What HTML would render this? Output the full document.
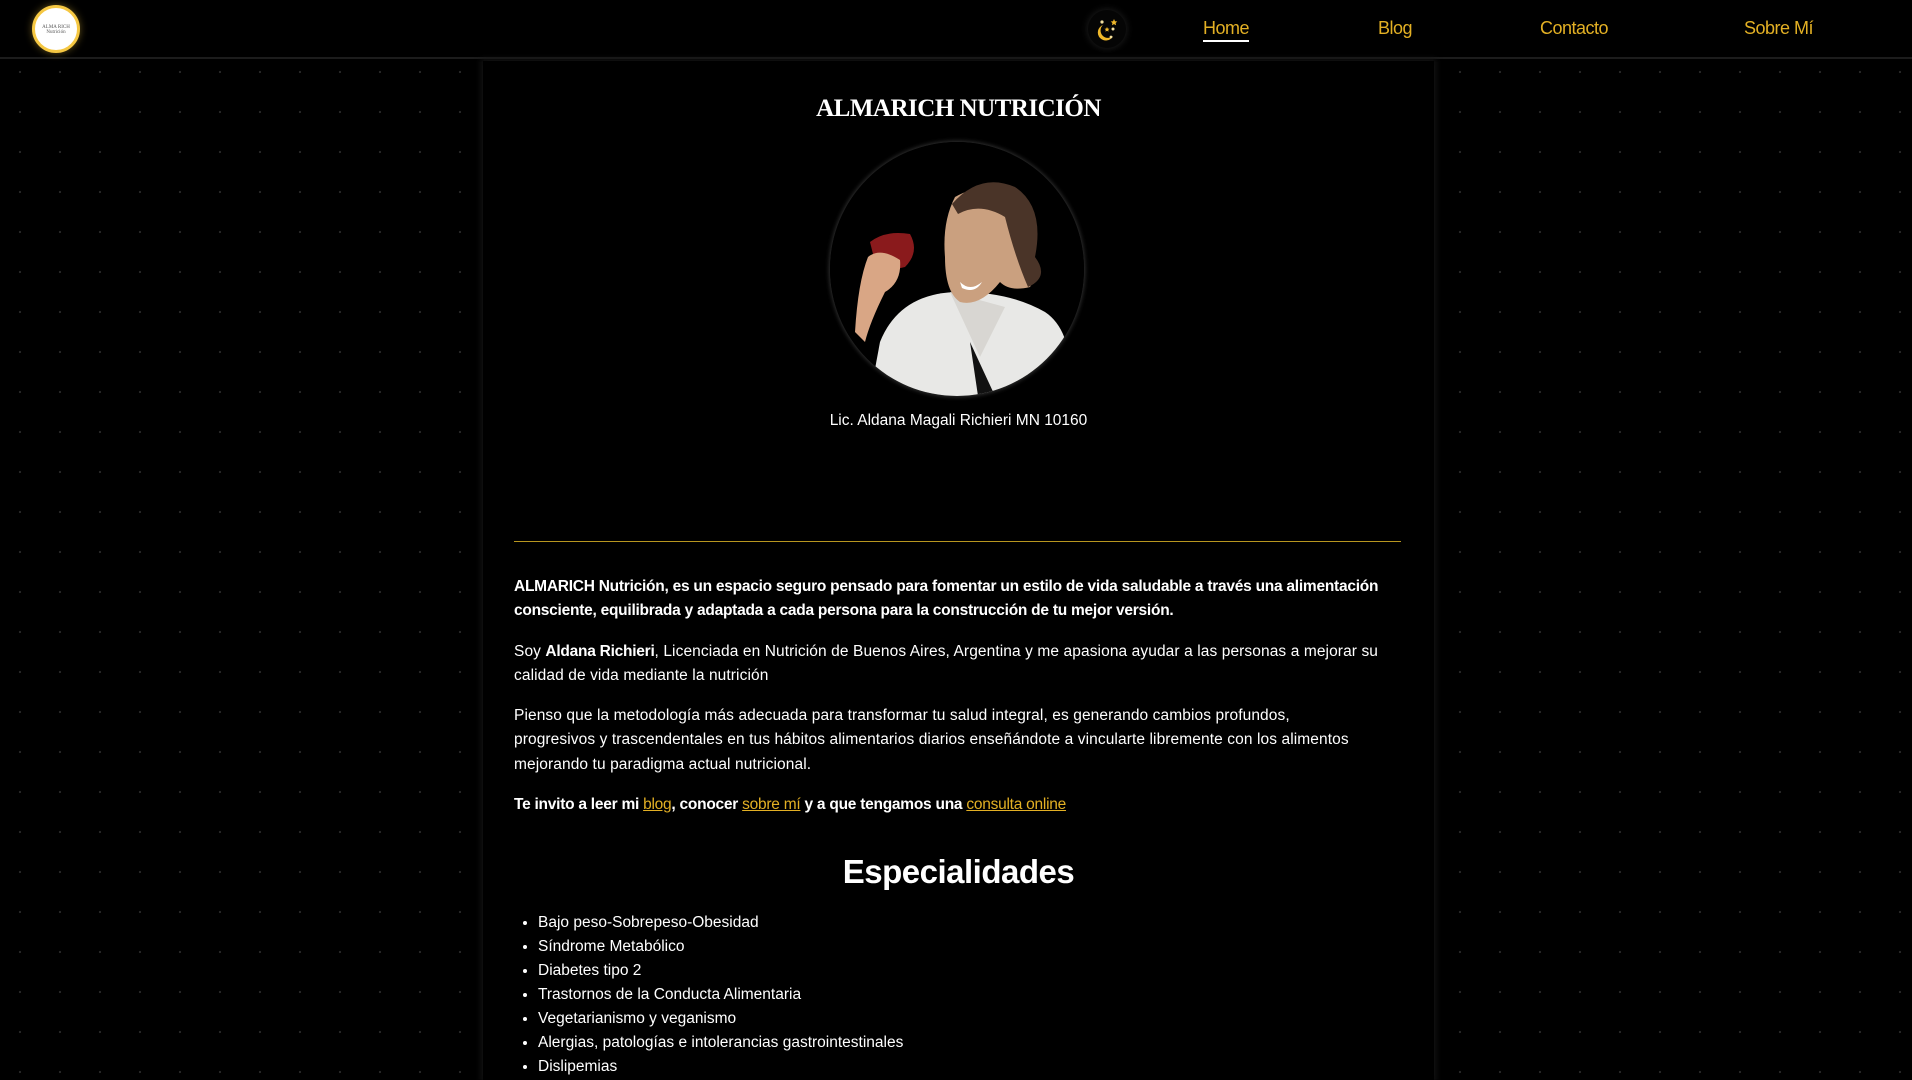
<!DOCTYPE html>
<html><head><meta charset="utf-8">
<style>
*{margin:0;padding:0;box-sizing:border-box}
html,body{width:1912px;height:1080px;overflow:hidden;background:#000;color:#fff;font-family:"Liberation Sans",sans-serif}
body{background-color:#000;background-image:radial-gradient(circle,#2a2a2a 0.9px,transparent 1.3px);background-size:40px 40px;background-position:0 12px}
header{position:absolute;left:0;top:0;width:1912px;height:59px;background:#000;border-bottom:2px solid #1c1c1c}
.logo{position:absolute;left:32px;top:5px;width:48px;height:48px;border-radius:50%;background:#fff;border:3px solid #f5c742;box-shadow:0 0 8px #f5c74266;text-align:center;font-family:"Liberation Serif",serif;color:#555;font-size:5px;padding-top:17px}
.moon{position:absolute;left:1088px;top:10px;width:38px;height:38px;border-radius:50%;background:#050505;box-shadow:0 0 8px #222}
nav a{position:absolute;top:18px;color:#e3b024;font-size:18px;text-decoration:none;letter-spacing:-0.5px}
nav a.act{border-bottom:2px solid #fff;padding-bottom:1px}
.panel{position:absolute;left:483px;top:61px;width:951px;height:1019px;background:#000;box-shadow:0 0 6px 2px #141414;overflow:hidden}
h1{position:absolute;top:34px;left:0;width:100%;text-align:center;font-family:"Liberation Serif",serif;font-size:25px;font-weight:bold;letter-spacing:-0.5px}
.pic{position:absolute;left:347px;top:81px;width:254px;height:254px;border-radius:50%;box-shadow:0 0 4px 1px #333;overflow:hidden;background:#000}
.cap{position:absolute;top:351px;width:100%;text-align:center;font-size:15.5px}
.rule{position:absolute;left:31px;top:480px;width:887px;height:1px;background:#b8961f}
.txt{position:absolute;left:31px;top:514px;width:900px;font-size:15.5px;line-height:24.3px;letter-spacing:0.1px}
.txt b{letter-spacing:-0.25px}
.txt p{margin-bottom:16px;white-space:nowrap}
.txt a{color:#e3b024;text-decoration:underline;font-weight:normal}
h2{position:absolute;top:792px;width:100%;text-align:center;font-size:33px;font-weight:bold;letter-spacing:-0.5px}
ul{position:absolute;left:55px;top:850px;font-size:15.5px;line-height:24px}
</style></head><body>
<header>
<div class="logo">ALMA RICH<br>Nutrición</div>
<div class="moon"><svg width="38" height="38" viewBox="0 0 38 38"><path d="M15 15a8 8 0 1 0 10 11a7 7 0 0 1-10-11z" fill="#f0b82a"/><circle cx="14" cy="12" r="1.6" fill="#f3e0a0"/><circle cx="25" cy="19" r="1.5" fill="#f3e0a0"/><circle cx="23" cy="27" r="1.4" fill="#f3e0a0"/><path d="M26 9l1 2.2 2.3.3-1.7 1.5.5 2.3-2.1-1.2-2.1 1.2.5-2.3-1.7-1.5 2.3-.3z" fill="#f0b82a"/><path d="M19 17l.8 1.6 1.7.2-1.3 1.1.4 1.7-1.6-.9-1.6.9.4-1.7-1.3-1.1 1.7-.2z" fill="#f0b82a"/></svg></div>
<nav><a class="act" style="left:1203px">Home</a><a style="left:1378px">Blog</a><a style="left:1540px">Contacto</a><a style="left:1744px">Sobre Mí</a></nav>
</header>
<div class="panel">
<h1>ALMARICH NUTRICIÓN</h1>
<div class="pic"><svg width="254" height="254" viewBox="0 0 254 254">
<rect width="254" height="254" fill="#000"/>
<path d="M40 254 L50 200 Q70 150 130 150 Q180 150 215 170 Q245 190 240 254Z" fill="#e8e8e6"/>
<path d="M140 200 L165 254 L148 254 Z" fill="#111"/>
<path d="M120 150 L150 215 L175 165 Z" fill="#d8d6d2"/>
<path d="M125 55 Q160 35 190 60 Q205 90 195 120 Q210 130 200 145 Q180 150 170 140 Q150 165 130 160 Q115 150 115 115 Q112 80 125 55Z" fill="#caa07f"/>
<path d="M122 62 Q150 30 185 45 Q215 65 205 115 Q220 135 198 145 Q185 115 175 75 Q150 60 128 72Z" fill="#4a3428"/>
<path d="M130 140 Q140 150 152 140 Q145 152 132 146Z" fill="#fff"/>
<path d="M40 100 Q55 88 80 92 Q90 110 75 125 Q55 130 45 120Z" fill="#8a1a1c"/>
<path d="M38 115 Q50 105 70 118 Q72 140 55 150 Q40 180 35 200 L25 190 Q28 140 38 115Z" fill="#d9a685"/>
</svg></div>
<div class="cap">Lic. Aldana Magali Richieri MN 10160</div>
<div class="rule"></div>
<div class="txt">
<p><b>ALMARICH Nutrición, es un espacio seguro pensado para fomentar un estilo de vida saludable a través una alimentación<br>consciente, equilibrada y adaptada a cada persona para la construcción de tu mejor versión.</b></p>
<p>Soy <b>Aldana Richieri</b>, Licenciada en Nutrición de Buenos Aires, Argentina y me apasiona ayudar a las personas a mejorar su<br>calidad de vida mediante la nutrición</p>
<p>Pienso que la metodología más adecuada para transformar tu salud integral, es generando cambios profundos,<br>progresivos y trascendentales en tus hábitos alimentarios diarios enseñándote a vincularte libremente con los alimentos<br>mejorando tu paradigma actual nutricional.</p>
<p><b>Te invito a leer mi <a>blog</a>, conocer <a>sobre mí</a> y a que tengamos una <a>consulta online</a></b></p>
</div>
<h2>Especialidades</h2>
<ul>
<li>Bajo peso-Sobrepeso-Obesidad</li>
<li>Síndrome Metabólico</li>
<li>Diabetes tipo 2</li>
<li>Trastornos de la Conducta Alimentaria</li>
<li>Vegetarianismo y veganismo</li>
<li>Alergias, patologías e intolerancias gastrointestinales</li>
<li>Dislipemias</li>
</ul>
</div>
</body></html>
